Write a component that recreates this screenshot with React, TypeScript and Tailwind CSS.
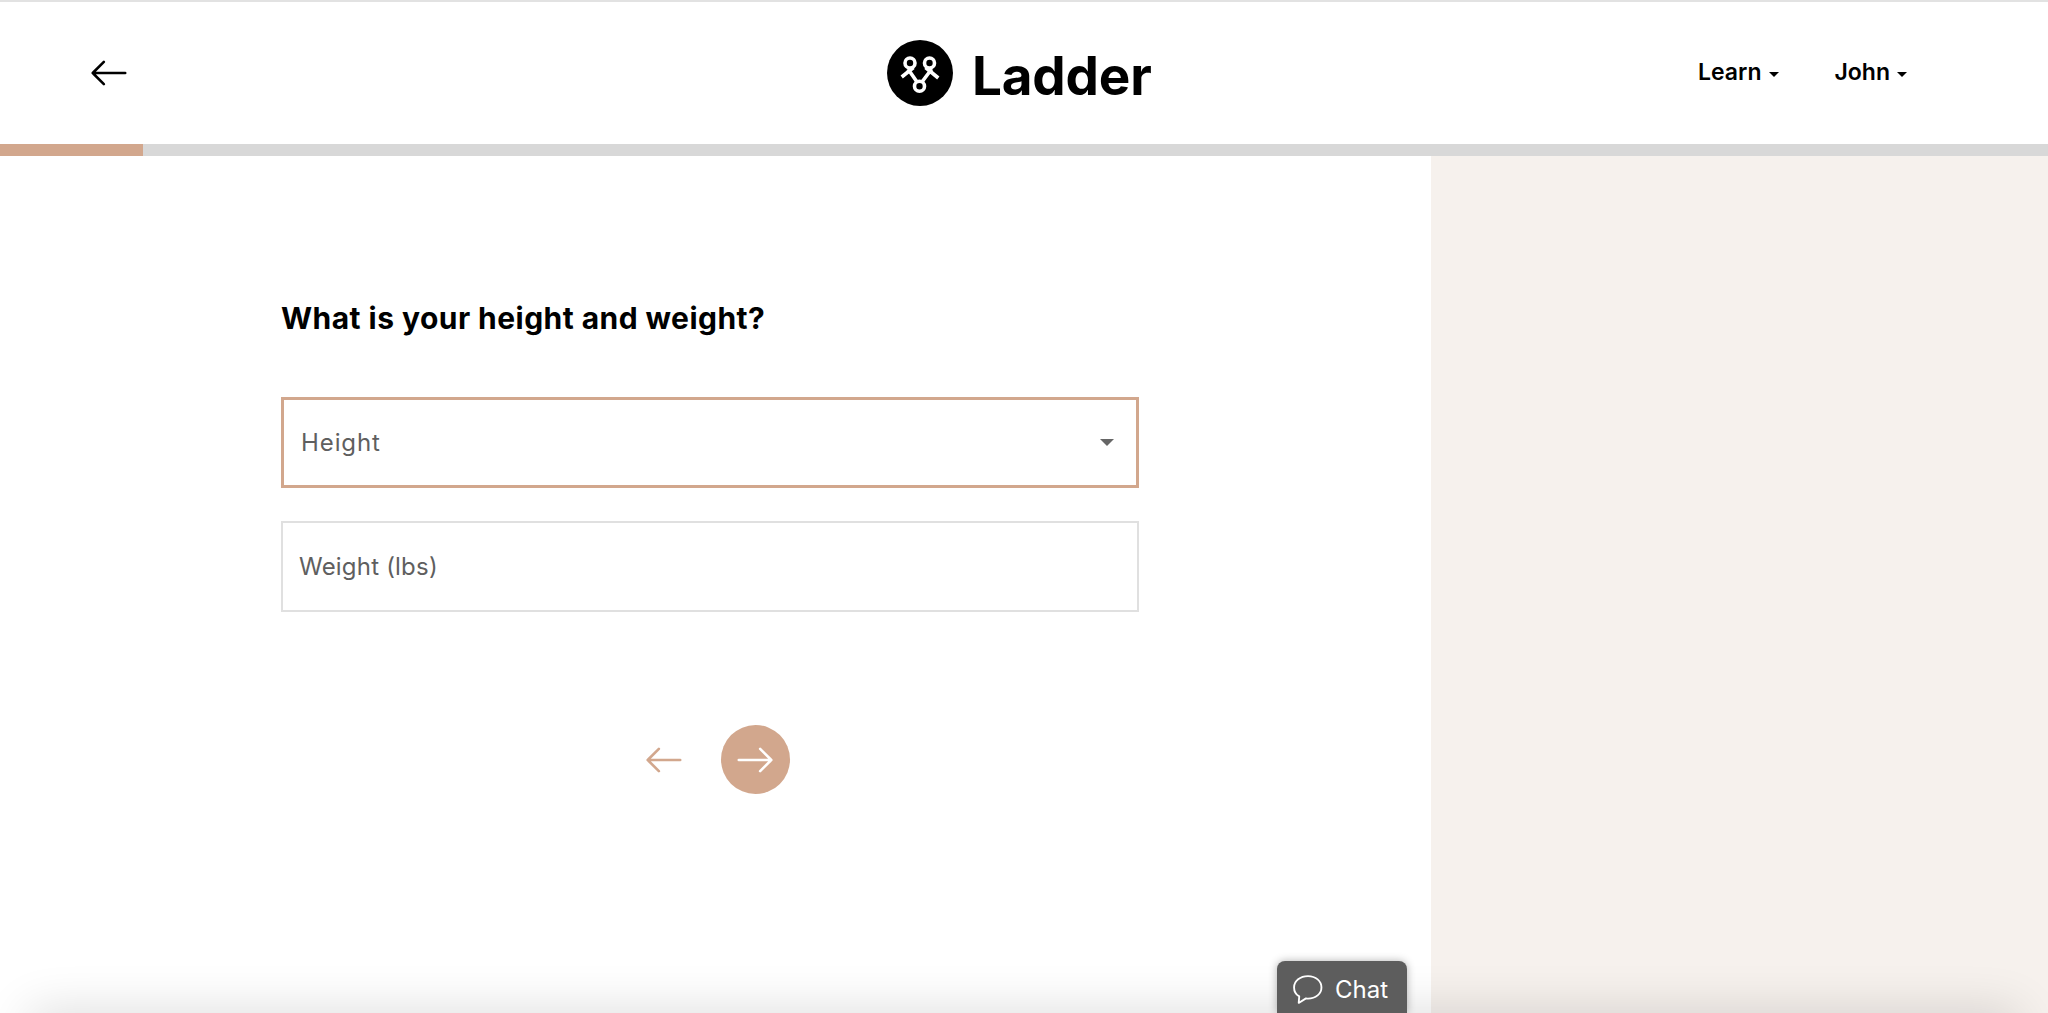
import React from 'react';

const font = { fontFamily: 'Inter, "Noto Sans", sans-serif' };

// Ladder mark: two loops on top, one below, legs crossing between them
const LadderLogo = () => (
  <svg viewBox="0 0 66 66" className="h-[66px] w-[66px]">
    <circle cx="33" cy="33" r="33" fill="#000" />
    <g fill="none" stroke="#fff" strokeWidth="3.6">
      <circle cx="23" cy="23" r="5" />
      <circle cx="42.5" cy="23" r="5" />
      <circle cx="32.5" cy="46.3" r="5" />
      <path d="M14.7 37 L26.5 27.5 M51.3 38 L38.5 27.5 M21 29 L29.7 41.5 M44.7 29 L35.3 41.5" />
    </g>
  </svg>
);

const ArrowLeft = ({ className }: { className: string }) => (
  <svg viewBox="0 0 38 28" className={className} fill="none" stroke="currentColor" strokeWidth="2.8" strokeLinecap="round" strokeLinejoin="round">
    <path d="M37 14 H2 M14 2 L2 14 L14 26" />
  </svg>
);

const ArrowRight = ({ className }: { className: string }) => (
  <svg viewBox="0 0 38 28" className={className} fill="none" stroke="currentColor" strokeWidth="2.8" strokeLinecap="round" strokeLinejoin="round">
    <path d="M1 14 H36 M24 2 L36 14 L24 26" />
  </svg>
);

const Caret = () => (
  <span className="ml-[7px] mt-[3px] h-0 w-0 border-x-[5px] border-t-[5px] border-x-transparent border-t-black" />
);

export default function App() {
  return (
    <div className="relative flex h-screen flex-col overflow-hidden bg-white" style={font}>
      <header className="flex h-[144px] shrink-0 items-center border-t-2 border-[#e2e2e2]">
        <div className="flex w-[660px] pl-[90px]">
          <ArrowLeft className="h-[26px] w-[37px] text-black" />
        </div>
        <div className="flex items-center gap-[19px] pl-[227px]">
          <LadderLogo />
          <span className="pt-[7px] text-[53px] font-bold leading-none tracking-[-0.2px] text-black">Ladder</span>
        </div>
        <nav className="ml-auto flex items-center gap-[56px] pr-[141px] pb-px text-[23px] font-semibold text-black">
          <span className="flex items-center">Learn<Caret /></span>
          <span className="flex items-center">John<Caret /></span>
        </nav>
      </header>

      <div className="h-[12px] shrink-0 bg-[#d8d8d8]">
        <div className="h-full w-[143px] bg-[#d2a78d]" />
      </div>

      <main className="flex min-h-0 flex-1">
        <section className="w-[1431px] pl-[281px] pt-[143px]">
          <h1 className="text-[30px] font-bold leading-[38px] tracking-[0.45px] text-black">What is your height and weight?</h1>

          <div className="mt-[60px] flex h-[91px] w-[858px] items-center justify-between border-[3px] border-[#d2a78d] pl-[17px] pr-[22px] text-[24px] text-[#5f5f5f]">
            <span className="tracking-[0.9px]">Height</span>
            <span className="h-0 w-0 border-x-[7px] border-t-[7px] border-x-transparent border-t-[#666]" />
          </div>

          <div className="mt-[33px] flex h-[91px] w-[858px] items-center border-2 border-[#e0e0e0] pl-[16px] text-[24px] tracking-[0.2px] text-[#5f5f5f]">
            Weight (lbs)
          </div>

          <div className="mt-[113px] flex w-[858px] items-center pl-[364px]">
            <ArrowLeft className="h-[26px] w-[37px] text-[#d2a78d]" />
            <button className="ml-[39px] flex h-[69px] w-[69px] items-center justify-center rounded-full bg-[#d2a78d] text-white">
              <ArrowRight className="h-[26px] w-[37px]" />
            </button>
          </div>
        </section>
        <aside className="flex-1 bg-[#f6f1ed]" />
      </main>

      {/* footer sitting just under the fold, only its shadow shows */}
      <div className="absolute left-[30px] right-[30px] top-full h-[40px] shadow-[0_0_50px_rgba(0,0,0,0.16)]" />

      <button className="absolute bottom-0 left-[1277px] flex h-[52px] w-[130px] items-center rounded-t-[8px] bg-[#5d5d5d] pl-[15px] text-[24px] text-white shadow-[0_0_8px_rgba(0,0,0,0.3)]">
        <svg viewBox="0 0 30 30" className="mt-[4px] h-[31px] w-[31px]" fill="none" stroke="currentColor" strokeWidth="1.8" strokeLinejoin="round">
          <path d="M15.5 2 C8 2 2 6.6 2 13 C2 17 4 20 7 21.6 L6.5 28 L13.5 23.6 C14.2 23.7 14.9 23.8 15.5 23.8 C23 23.8 28.5 19 28.5 13 C28.5 6.8 23 2 15.5 2 Z" />
        </svg>
        <span className="ml-[12px] pt-[5px]">Chat</span>
      </button>
    </div>
  );
}
